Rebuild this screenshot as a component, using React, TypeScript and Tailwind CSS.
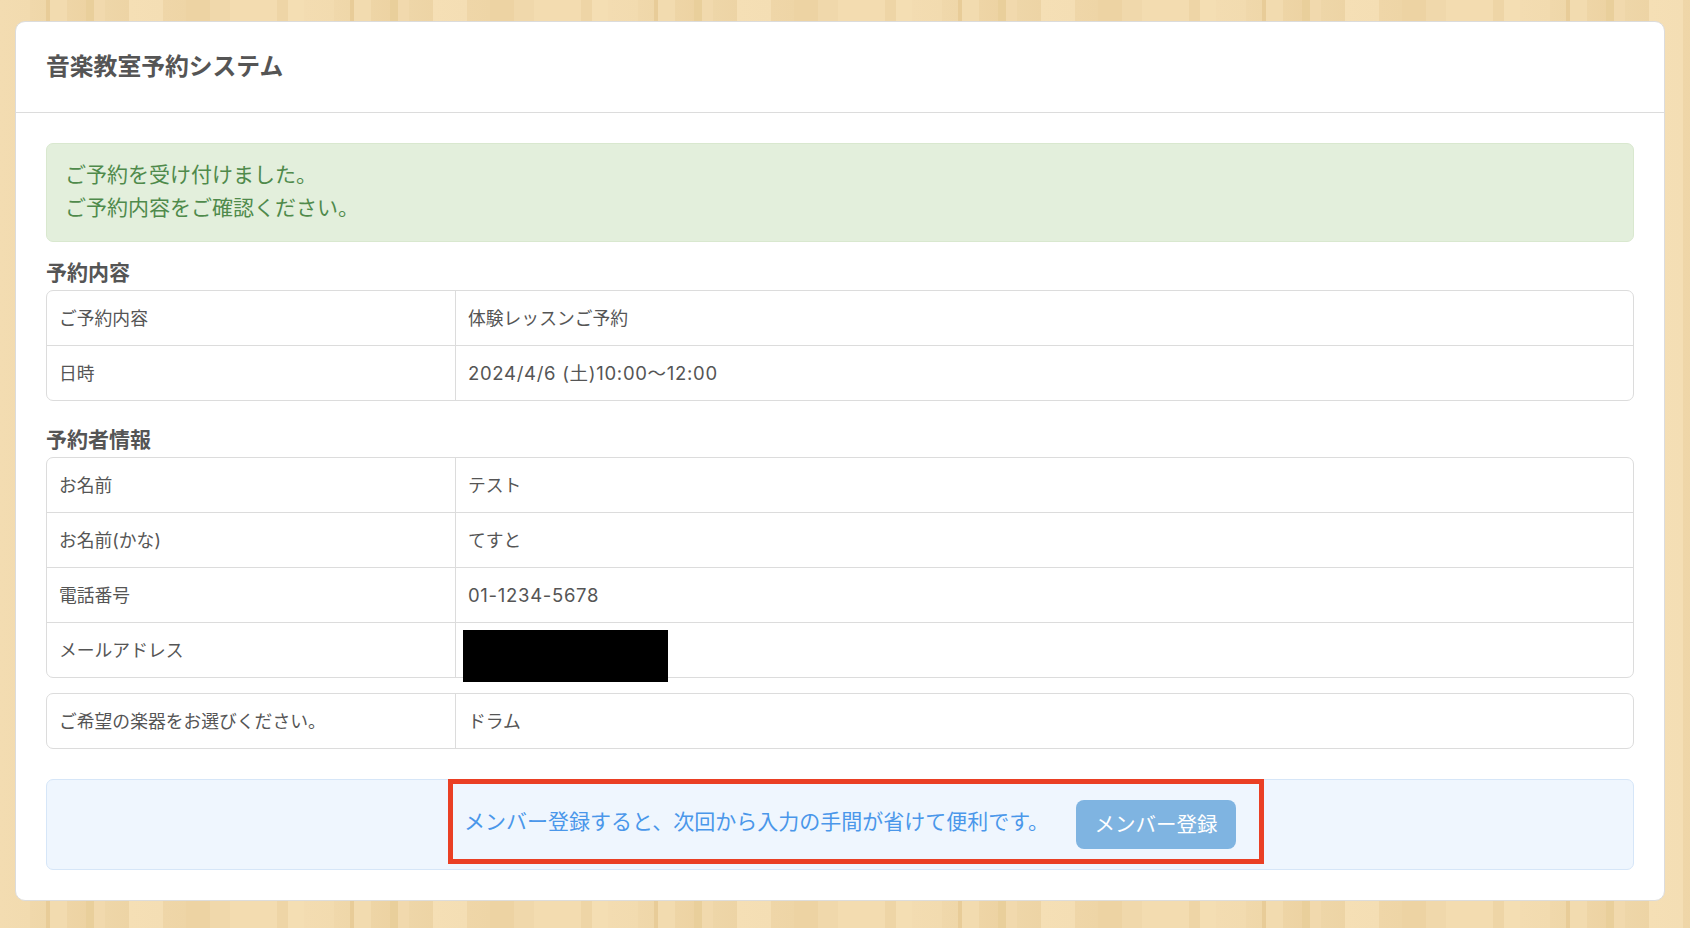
const FONT = "font-['Inter','Noto_Sans_CJK_JP',sans-serif]";

interface Row {
  label: string;
  value?: string;
  latin?: boolean;
  redacted?: boolean;
}

const LESSON_ROWS: Row[] = [
  { label: "ご予約内容", value: "体験レッスンご予約" },
  { label: "日時", value: "2024/4/6 (土)10:00〜12:00", latin: true },
];

const CUSTOMER_ROWS: Row[] = [
  { label: "お名前", value: "テスト" },
  { label: "お名前(かな)", value: "てすと" },
  { label: "電話番号", value: "01-1234-5678", latin: true },
  { label: "メールアドレス", redacted: true },
];

const INSTRUMENT_ROWS: Row[] = [{ label: "ご希望の楽器をお選びください。", value: "ドラム" }];

function InfoTable({ rows }: { rows: Row[] }) {
  return (
    <div className="rounded-[7px] border border-[#dcdcdc] text-[17.8px]">
      {rows.map((row, i) => (
        <div key={row.label} className={`flex ${i > 0 ? "h-[55px] border-t border-[#dcdcdc]" : "h-[54px]"}`}>
          <div className="flex w-[409px] shrink-0 items-center border-r border-[#dcdcdc] pt-[2px] pl-[12px]">
            {row.label}
          </div>
          <div className="relative flex flex-1 items-center pt-[2px] pl-[12px]">
            <span className={row.latin ? "text-[18.5px] tracking-[0.7px]" : ""}>{row.value}</span>
            {/* masked in the screenshot */}
            {row.redacted && <div className="absolute top-[7px] left-[7px] h-[52px] w-[205px] bg-black" />}
          </div>
        </div>
      ))}
    </div>
  );
}

export default function App() {
  return (
    <div
      className={`${FONT} min-h-[928px] bg-[#f3dcb1] bg-[repeating-linear-gradient(90deg,#f3dcb1_0,#f2dbaf_30px,#f0d8ab_30px,#efd7a9_46px,#e8cc98_46px,#e8cc98_50px,#f2dbaf_50px,#f2dbaf_67px,#eed5a6_67px,#edd3a3_86px,#e9cf9b_86px,#e9cf9b_94px,#f1d9ad_94px,#f1d9ad_105px,#eed6a8_105px,#edd4a5_129px,#f5dfb5_129px,#f4deb4_163px,#efd6a8_163px,#eed5a6_186px,#edd3a3_186px,#edd3a3_210px,#f0d8ab_210px,#f0d8ab_230px,#f3dcb0_230px,#f3dcb0_277px,#eed5a6_277px,#eed5a6_288px,#f4deb3_288px,#f4deb3_304px)] pt-[21px] pr-[25px] pb-[27px] pl-[15px] text-[#555555]`}
    >
      <div className="rounded-[10px] border border-[#dcdcdc] bg-white">
        <div className="flex h-[91px] items-center border-b border-[#dcdcdc] pl-[30px] text-[23.8px] font-bold">
          音楽教室予約システム
        </div>

        <div className="p-[30px]">
          <div className="flex h-[99px] flex-col justify-center rounded-[7px] border border-[#d9e8cf] bg-[#e3efdc] pb-[3px] pl-[18px] text-[21px] leading-[33px] text-[#4f8a4b]">
            <p>ご予約を受け付けました。</p>
            <p>ご予約内容をご確認ください。</p>
          </div>

          <h2 className="mt-[16px] h-[32px] text-[21px] leading-[30px] font-bold">予約内容</h2>
          <InfoTable rows={LESSON_ROWS} />

          <h2 className="mt-[24px] h-[32px] text-[21px] leading-[30px] font-bold">予約者情報</h2>
          <InfoTable rows={CUSTOMER_ROWS} />

          <div className="mt-[15px]">
            <InfoTable rows={INSTRUMENT_ROWS} />
          </div>

          <div className="relative mt-[30px] flex h-[91px] items-center rounded-[7px] border border-[#d6e6f8] bg-[#eff6fe] pl-[417px] text-[21px] text-[#4a97ea]">
            <span className="mb-[6px]">メンバー登録すると、次回から入力の手間が省けて便利です。</span>
            <button className="ml-[27px] h-[49px] w-[160px] rounded-[8px] bg-[#7fb4e1] pt-[2px] text-[20.5px] text-white">
              メンバー登録
            </button>
            {/* red annotation drawn over the screenshot */}
            <div className="absolute top-[-1px] left-[401px] h-[85px] w-[816px] border-[5px] border-[#ea3f24]" />
          </div>
        </div>
      </div>
    </div>
  );
}
